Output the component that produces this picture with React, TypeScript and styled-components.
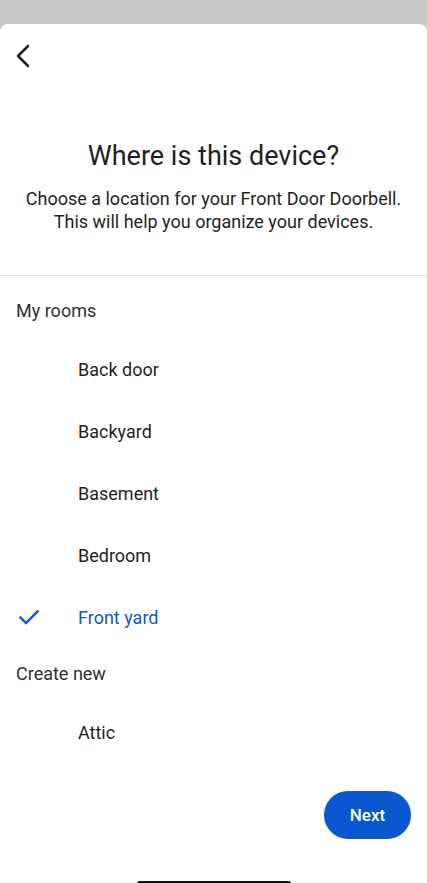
import React from "react";
import styled, { createGlobalStyle } from "styled-components";

const Global = createGlobalStyle`
  html, body { margin: 0; padding: 0; background: #cbcbca; }
  body { font-family: Roboto, "Noto Sans", sans-serif; -webkit-font-smoothing: antialiased; }
  * { box-sizing: border-box; }
`;

const Page = styled.div`
  width: 427px;
  height: 883px;
  background: linear-gradient(#c9c9c8, #cdcdcc);
  padding-top: 24px;
  overflow: hidden;
`;

const Sheet = styled.div`
  position: relative;
  height: 859px;
  background: #fff;
  border-radius: 8px 8px 0 0;
  display: flex;
  flex-direction: column;
`;

const TopBar = styled.div`
  height: 60px;
  padding: 18px 0 0 11px;
`;

const BackButton = styled.button`
  width: 24px;
  height: 28px;
  border: 0;
  background: none;
  padding: 0;
  display: flex;
  align-items: center;
  justify-content: center;
  color: #1f1f1f;
`;

const Header = styled.div`
  padding: 54px 12px 0;
  text-align: center;
  border-bottom: 1px solid #e3e3e3;
  height: 192px;
`;

const Title = styled.h1`
  margin: 0;
  font-weight: 400;
  font-size: 27px;
  line-height: 36px;
  color: #1f1f1f;
`;

const Subtitle = styled.p`
  margin: 13px 0 0;
  font-size: 18px;
  line-height: 23px;
  color: #1f1f1f;
`;

const SectionLabel = styled.div`
  padding-left: 16px;
  font-size: 18px;
  color: #303030;
  height: 24px;
  line-height: 24px;
`;

const List = styled.ul`
  list-style: none;
  margin: 0;
  padding: 15px 0 14px;
`;

const Rooms = styled.section`
  padding-top: 23px;
`;

const Row = styled.li<{ $selected?: boolean }>`
  display: grid;
  grid-template-columns: 78px 1fr;
  align-items: center;
  height: 62px;
  font-size: 18px;
  color: ${(p) => (p.$selected ? "#0b57d0" : "#1f1f1f")};
`;

const CheckCell = styled.span`
  display: flex;
  justify-content: flex-start;
  padding-left: 17px;
  color: #0b57d0;
`;

const Footer = styled.div`
  margin-top: auto;
  display: flex;
  justify-content: flex-end;
  padding: 0 16px 44px;
`;

const NextButton = styled.button`
  width: 87px;
  height: 48px;
  border-radius: 24px;
  border: 0;
  background: #0b57d0;
  color: #fff;
  font-family: Roboto, sans-serif;
  font-size: 17px;
  font-weight: 500;
`;

const HomeBar = styled.div`
  position: absolute;
  left: 137px;
  bottom: -3px;
  width: 154px;
  height: 5px;
  border-radius: 3px;
  background: #111;
`;

const rooms = ["Back door", "Backyard", "Basement", "Bedroom", "Front yard"];

export default function App() {
  return (
    <>
      <Global />
      <Page>
        <Sheet>
          <TopBar>
            <BackButton aria-label="Back">
              <svg width="16" height="24" viewBox="0 0 16 24">
                <path d="M13 2 L3 12 L13 22" fill="none" stroke="currentColor" strokeWidth="2.6" strokeLinecap="round" strokeLinejoin="round" />
              </svg>
            </BackButton>
          </TopBar>
          <Header>
            <Title>Where is this device?</Title>
            <Subtitle>
              Choose a location for your Front Door Doorbell.
              <br />
              This will help you organize your devices.
            </Subtitle>
          </Header>
          <Rooms>
            <SectionLabel>My rooms</SectionLabel>
            <List>
              {rooms.map((r) => {
                const sel = r === "Front yard";
                return (
                  <Row key={r} $selected={sel}>
                    <CheckCell>
                      {sel && (
                        <svg width="24" height="24" viewBox="0 0 24 24">
                          <path d="M3.5 12.5 L9 18 L20.5 6.5" fill="none" stroke="currentColor" strokeWidth="2.4" strokeLinecap="square" />
                        </svg>
                      )}
                    </CheckCell>
                    <span>{r}</span>
                  </Row>
                );
              })}
            </List>
            <SectionLabel>Create new</SectionLabel>
            <List>
              <Row>
                <CheckCell />
                <span>Attic</span>
              </Row>
            </List>
          </Rooms>
          <Footer>
            <NextButton>Next</NextButton>
          </Footer>
          <HomeBar />
        </Sheet>
      </Page>
    </>
  );
}
